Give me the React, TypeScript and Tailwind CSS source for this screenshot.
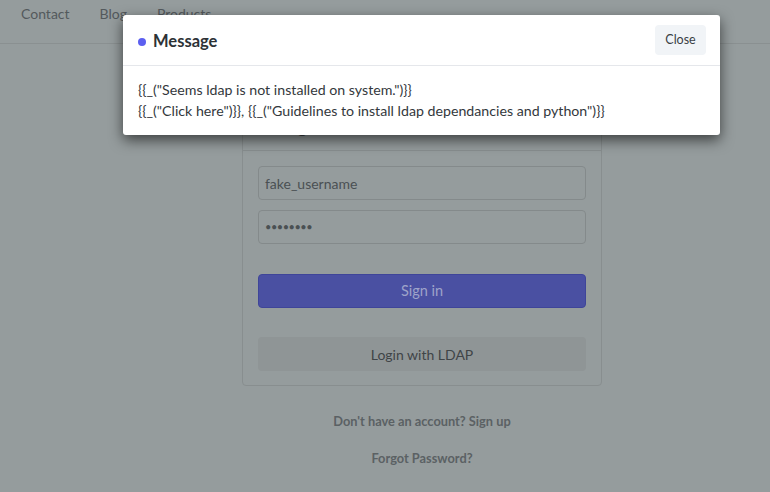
import React from 'react';

export default function App() {
  return (
    <div className="relative h-[492px] w-[770px] overflow-hidden bg-[#959c9d] font-['Lato',sans-serif] text-[#4a5053]">
      {/* Page under the backdrop */}
      <nav className="flex h-[44px] items-start border-b border-[#8a9091] pl-[21px] pt-[3px] text-[14px] text-[#53595c]">
        <a className="mr-[30px]">Contact</a>
        <a className="mr-[30px]">Blog</a>
        <a>Products</a>
      </nav>

      <div className="ml-[242px] w-[360px]">
        <div className="mt-[56px] rounded-[4px] border border-[#888e8f]">
          <div className="h-[50px] border-b border-[#888e8f] px-[40px] pt-[12px] text-[18px] font-bold text-[#3b4043]">
            Sign in
          </div>
          <div className="px-[15px] pt-[15px] pb-[14px]">
            <div className="flex h-[34px] items-center rounded-[4px] border border-[#848a8b] px-[6px] text-[14px] text-[#4a5053]">
              fake_username
            </div>
            <div className="mt-[10px] flex h-[34px] items-center rounded-[4px] border border-[#848a8b] px-[6px] text-[11px] tracking-[-0.5px] text-[#4a5053]">
              ••••••••
            </div>
            <button className="mt-[30px] flex h-[34px] w-full items-center justify-center rounded-[4px] border border-[#3f4599] bg-[#4a50a2] text-[14.5px] text-[#9ea3c9]">
              Sign in
            </button>
            <button className="mt-[29px] flex h-[34px] w-full items-center justify-center rounded-[4px] bg-[#8f9596] text-[14px] text-[#3f4447]">
              Login with LDAP
            </button>
          </div>
        </div>

        <div className="mt-[26px] text-center text-[12.8px] font-bold text-[#5b6164]">Don't have an account? Sign up</div>
        <div className="mt-[18px] text-center text-[12.8px] font-bold text-[#5b6164]">Forgot Password?</div>
      </div>

      {/* Modal */}
      <div className="absolute left-[123px] top-[15px] w-[597px] rounded-[3px] bg-white shadow-[0_5px_14px_rgba(0,0,0,0.6)]">
        <div className="flex h-[51px] items-center justify-between border-b border-[#e5e7eb] pl-[15px] pr-[14px]">
          <div className="flex items-center pt-[3px]">
            <span className="mr-[7px] h-[8px] w-[8px] rounded-full bg-[#5c5ff0]" />
            <span className="text-[16.5px] font-bold text-[#2d3236]">Message</span>
          </div>
          <button className="h-[30px] w-[51px] rounded-[4px] bg-[#f1f4f7] text-[12.5px] text-[#3a3f44]">Close</button>
        </div>
        <div className="px-[15px] pt-[13px] pb-[14px] text-[14.2px] leading-[21px] text-[#33383c]">
          <div>{'{{_("Seems ldap is not installed on system.")}}'}</div>
          <div>{'{{_("Click here")}}, {{_("Guidelines to install ldap dependancies and python")}}'}</div>
        </div>
      </div>
    </div>
  );
}
